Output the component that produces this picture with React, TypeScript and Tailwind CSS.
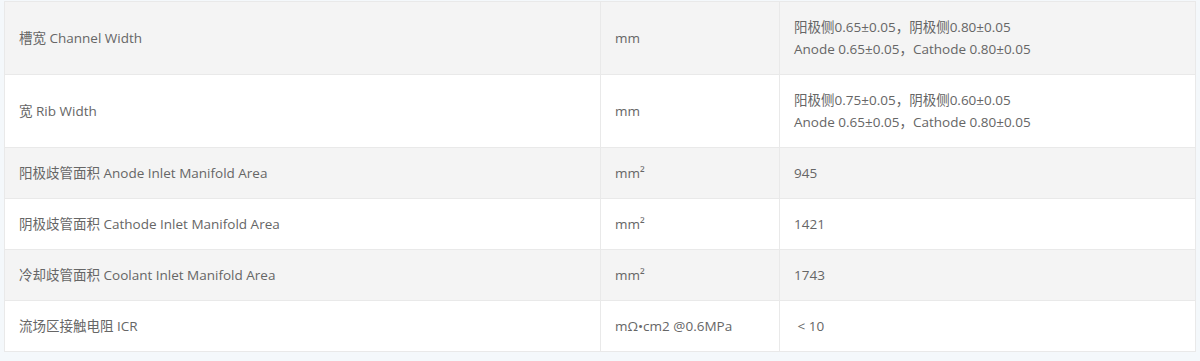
const rows = [
  {
    name: "槽宽 Channel Width",
    unit: "mm",
    value: ["阳极侧0.65±0.05，阴极侧0.80±0.05", "Anode 0.65±0.05，Cathode 0.80±0.05"],
  },
  {
    name: "宽 Rib Width",
    unit: "mm",
    value: ["阳极侧0.75±0.05，阴极侧0.60±0.05", "Anode 0.65±0.05，Cathode 0.80±0.05"],
  },
  { name: "阳极歧管面积 Anode Inlet Manifold Area", unit: "mm²", value: ["945"] },
  { name: "阴极歧管面积 Cathode Inlet Manifold Area", unit: "mm²", value: ["1421"] },
  { name: "冷却歧管面积 Coolant Inlet Manifold Area", unit: "mm²", value: ["1743"] },
  { name: "流场区接触电阻 ICR", unit: "mΩ•cm2 @0.6MPa", value: [" < 10"] },
];

export default function App() {
  return (
    <div
      className="w-[1200px] h-[361px] bg-[#f4f8fb] pt-px pl-1 text-[13.5px] leading-[22px] text-[#666]"
      style={{ fontFamily: '"Open Sans", "Noto Sans CJK SC", sans-serif' }}
    >
      <table className="w-[1192px] border-collapse bg-white table-fixed">
        <colgroup>
          <col className="w-[596px]" />
          <col className="w-[179px]" />
          <col />
        </colgroup>
        <tbody>
          {rows.map((r, i) => (
            <tr key={i} className={i % 2 === 0 ? "bg-[#f4f4f4]" : "bg-white"}>
              <td className="border border-[#e9e9e9] px-[14px] py-[14px] align-middle">{r.name}</td>
              <td className="border border-[#e9e9e9] px-[14px] py-[14px] align-middle whitespace-pre">{r.unit}</td>
              <td className="border border-[#e9e9e9] px-[14px] py-[14px] align-middle whitespace-pre">
                {r.value.map((v, j) => (
                  <div key={j}>{v}</div>
                ))}
              </td>
            </tr>
          ))}
        </tbody>
      </table>
    </div>
  );
}
